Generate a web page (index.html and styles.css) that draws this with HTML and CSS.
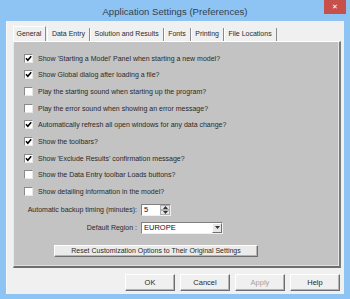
FILE: index.html
```html
<!DOCTYPE html>
<html>
<head>
<meta charset="utf-8">
<link rel="stylesheet" href="styles.css">
</head>
<body>
<div class="window">
  <div class="titlebar">
    <div></div>
    <div class="title">Application Settings (Preferences)</div>
    <div class="close">✕</div>
  </div>
  <div class="client">
    <div class="tabs">
      <div class="tab active">General</div>
      <div class="tab">Data Entry</div>
      <div class="tab">Solution and Results</div>
      <div class="tab">Fonts</div>
      <div class="tab">Printing</div>
      <div class="tab">File Locations</div>
    </div>
    <div class="panel">
      <div class="checks">
        <label class="row"><span class="cb on"><svg viewBox="0 0 7 7"><path d="M1 3.3 L2.8 5.2 L6.2 1.2"/></svg></span>Show 'Starting a Model' Panel when starting a new model?</label>
        <label class="row"><span class="cb on"><svg viewBox="0 0 7 7"><path d="M1 3.3 L2.8 5.2 L6.2 1.2"/></svg></span>Show Global dialog after loading a file?</label>
        <label class="row"><span class="cb"></span>Play the starting sound when starting up the program?</label>
        <label class="row"><span class="cb"></span>Play the error sound when showing an error message?</label>
        <label class="row"><span class="cb on"><svg viewBox="0 0 7 7"><path d="M1 3.3 L2.8 5.2 L6.2 1.2"/></svg></span>Automatically refresh all open windows for any data change?</label>
        <label class="row"><span class="cb on"><svg viewBox="0 0 7 7"><path d="M1 3.3 L2.8 5.2 L6.2 1.2"/></svg></span>Show the toolbars?</label>
        <label class="row"><span class="cb on"><svg viewBox="0 0 7 7"><path d="M1 3.3 L2.8 5.2 L6.2 1.2"/></svg></span>Show 'Exclude Results' confirmation message?</label>
        <label class="row"><span class="cb"></span>Show the Data Entry toolbar Loads buttons?</label>
        <label class="row"><span class="cb"></span>Show detailing information in the model?</label>
      </div>
      <div class="fields">
        <div class="flabel">Automatic backup timing (minutes):</div>
        <div class="spin">
          <div class="spinval">5</div>
          <div class="spinbtns">
            <div class="sbtn"><svg viewBox="0 0 5 3"><path d="M0 3 L2.5 0 L5 3Z"/></svg></div>
            <div class="sbtn"><svg viewBox="0 0 5 3"><path d="M0 0 L2.5 3 L5 0Z"/></svg></div>
          </div>
        </div>
        <div class="flabel">Default Region :</div>
        <div class="combo">
          <div class="comboval">EUROPE</div>
          <div class="combobtn"><svg viewBox="0 0 5 3"><path d="M0 0 L2.5 3 L5 0Z"/></svg></div>
        </div>
      </div>
      <div class="resetrow">
        <div class="btn reset">Reset Customization Options to Their Original Settings</div>
      </div>
    </div>
    <div class="buttons">
      <div class="btn dlg">OK</div>
      <div class="btn dlg">Cancel</div>
      <div class="btn dlg disabled">Apply</div>
      <div class="btn dlg">Help</div>
    </div>
  </div>
</div>
</body>
</html>
```
FILE: styles.css
```css
* { box-sizing: border-box; }
html, body { margin: 0; padding: 0; }
body {
  width: 350px;
  height: 299px;
  background: #8ec4f3;
  font-family: "Liberation Sans", Arial, sans-serif;
  overflow: hidden;
}
.window {
  width: 350px;
  height: 299px;
  display: flex;
  flex-direction: column;
}
.titlebar {
  height: 21px;
  display: grid;
  grid-template-columns: 1fr auto 1fr;
  align-items: start;
}
.title {
  font-size: 9.6px;
  color: #34414e;
  line-height: 21px;
  padding-top: 1px;
  white-space: nowrap;
}
.close {
  justify-self: end;
  margin-right: 4px;
  width: 22px;
  height: 14px;
  background: #c7504b;
  color: #fff;
  font-size: 7px;
  line-height: 14px;
  text-align: center;
  font-family: "DejaVu Sans", sans-serif;
  font-weight: bold;
}
.client {
  margin: 0 6px 5px 6px;
  height: 273px;
  background: #f0f0f0;
  padding: 5px 3px 0 6px;
  display: flex;
  flex-direction: column;
  border-left: 1px solid #f8f8f8;
}
.tabs {
  display: flex;
  height: 15px;
  align-items: flex-end;
  padding-left: 1px;
  margin-left: -1px;
}
.tab {
  height: 13px;
  font-size: 7px;
  color: #2a2a2a;
  line-height: 12px;
  padding: 0 4px 0 3.5px;
  border-left: 1px solid #ffffff;
  border-right: 1px solid #8a8a8a;
  white-space: nowrap;
}
.tab.active {
  height: 15px;
  padding: 0 4px 0 2.5px;
  line-height: 14px;
  border-top: 1px solid #ffffff;
  border-left: 1px solid #ffffff;
  border-right: 1px solid #8a8a8a;
  background: #f0f0f0;
  margin-right: 1px;
}
.panel {
  height: 227px;
  background: #c3c3c3;
  border-top: 1px solid #ffffff;
  border-left: 1px solid #e8e8e8;
  border-right: 2px solid #7a7a7a;
  border-bottom: 2px solid #6e6e6e;
  box-shadow: inset -1px 0 0 #e6e6e6, inset 0 -1px 0 #e0e0e0;
  padding: 8px 0 0 10px;
  display: flex;
  flex-direction: column;
}
.checks {
  display: flex;
  flex-direction: column;
}
.row {
  height: 16.65px;
  display: flex;
  align-items: center;
  font-size: 7px;
  color: #2a2a2a;
  white-space: nowrap;
}
.cb {
  width: 9px;
  height: 9px;
  background: #fff;
  border-top: 1px solid #8a8a8a;
  border-left: 1px solid #8a8a8a;
  border-right: 1px solid #e8e8e8;
  border-bottom: 1px solid #e8e8e8;
  margin-right: 5px;
  display: flex;
  align-items: center;
  justify-content: center;
  flex: 0 0 auto;
}
.cb svg {
  width: 7px;
  height: 7px;
  fill: none;
  stroke: #000;
  stroke-width: 1.6;
}
.fields {
  margin-top: 4px;
  display: grid;
  grid-template-columns: 113px auto;
  column-gap: 4px;
  row-gap: 6px;
  align-items: center;
  justify-content: start;
}
.flabel {
  font-size: 7px;
  color: #2a2a2a;
  text-align: right;
  white-space: nowrap;
}
.spin {
  width: 30px;
  height: 12px;
  display: flex;
  background: #fff;
  border-top: 1px solid #808080;
  border-left: 1px solid #808080;
  border-right: 1px solid #f0f0f0;
  border-bottom: 1px solid #f0f0f0;
}
.spinval {
  flex: 1;
  font-size: 7.5px;
  line-height: 10px;
  padding-left: 2px;
  color: #111;
}
.spinbtns {
  width: 10px;
  display: flex;
  flex-direction: column;
}
.sbtn {
  flex: 1;
  background: #e6e6e6;
  border: 1px solid #b0b0b0;
  display: flex;
  align-items: center;
  justify-content: center;
}
.sbtn svg, .combobtn svg {
  width: 5px;
  height: 3px;
  fill: #333;
}
.combo {
  width: 82px;
  height: 12px;
  display: flex;
  background: #fff;
  border-top: 1px solid #808080;
  border-left: 1px solid #808080;
  border-right: 1px solid #f0f0f0;
  border-bottom: 1px solid #f0f0f0;
}
.comboval {
  flex: 1;
  font-size: 7.5px;
  line-height: 10px;
  padding-left: 2px;
  color: #111;
}
.combobtn {
  width: 10px;
  background: #e6e6e6;
  border-top: 1px solid #fff;
  border-left: 1px solid #fff;
  border-right: 1px solid #707070;
  border-bottom: 1px solid #707070;
  display: flex;
  align-items: center;
  justify-content: center;
}
.resetrow {
  margin-top: 11px;
  padding-left: 30px;
}
.btn {
  background: #ebebeb;
  border-top: 1px solid #ffffff;
  border-left: 1px solid #ffffff;
  border-right: 1px solid #6e6e6e;
  border-bottom: 1px solid #6e6e6e;
  box-shadow: inset -1px -1px 0 #b4b4b4;
  font-size: 7px;
  color: #2a2a2a;
  text-align: center;
  white-space: nowrap;
}
.reset {
  width: 204px;
  height: 12px;
  line-height: 10px;
}
.buttons {
  margin-top: 6px;
  display: flex;
  justify-content: flex-end;
  gap: 5px;
  padding-right: 1px;
}
.dlg {
  width: 50px;
  height: 17px;
  line-height: 15px;
  font-size: 7.5px;
  background: #f0f0f0;
}
.dlg.disabled {
  color: #a2a2a2;
}
```
